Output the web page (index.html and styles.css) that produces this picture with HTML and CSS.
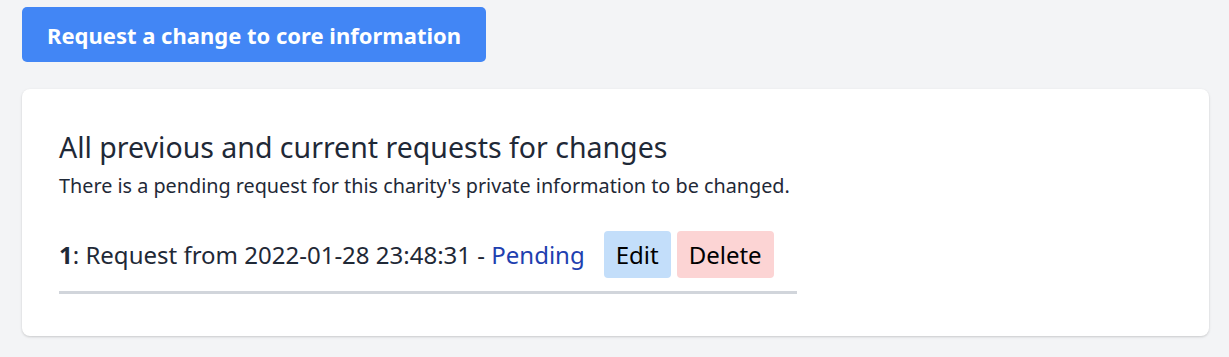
FILE: index.html
```html
<!DOCTYPE html>
<html lang="en">
<head>
<meta charset="utf-8">
<title>Core information</title>
<link rel="stylesheet" href="styles.css">
</head>
<body>
    <div class="page">
        <button class="request_btn" type="button">Request a change to core information</button>

        <div class="card">
            <h2 class="card_title">All previous and current requests for changes</h2>
            <p class="card_note">There is a pending request for this charity's private information to be changed.</p>

            <div class="request_row">
                <span class="request_text"><b>1</b>: Request from 2022-01-28 23:48:31 - <span class="status">Pending</span></span>
                <button class="small_btn edit_btn" type="button">Edit</button>
                <button class="small_btn delete_btn" type="button">Delete</button>
            </div>
        </div>
    </div>
</body>
</html>
```

FILE: styles.css
```css
body {
    margin: 0;
    background-color: #f3f4f6;
    font-family: "Noto Sans", sans-serif;
    color: #1f2937;
}

.page {
    padding: 7px 20px 21px 22px;
}

.request_btn {
    display: block;
    font-family: inherit;
    font-size: 22px;
    font-weight: bold;
    color: white;
    background-color: #4286f5;
    border: none;
    border-radius: 5px;
    height: 55px;
    padding: 0 25px;
}

.card {
    margin-top: 27px;
    background-color: white;
    border-radius: 8px;
    box-shadow: 0 1px 3px rgba(0, 0, 0, 0.12), 0 1px 2px rgba(0, 0, 0, 0.06);
    padding: 38px 37px 42px 37px;
}

.card_title {
    margin: 0;
    font-size: 28.5px;
    font-weight: normal;
    line-height: 40px;
}

.card_note {
    margin: 5px 0 0 0;
    font-size: 19.8px;
    line-height: 28px;
}

.request_row {
    display: flex;
    align-items: center;
    width: 738px;
    margin-top: 31px;
    padding-bottom: 13px;
    border-bottom: 3px solid #d1d5db;
    font-size: 24px;
}

.status {
    color: #1e40af;
}

.request_text {
    margin-right: 19px;
}

.small_btn {
    font-family: inherit;
    font-size: 24px;
    color: black;
    border: none;
    border-radius: 4px;
    height: 47px;
    padding: 0 12px;
    margin-right: 6px;
}

.edit_btn {
    background-color: #c3defa;
}

.delete_btn {
    background-color: #fcd4d4;
}
```
